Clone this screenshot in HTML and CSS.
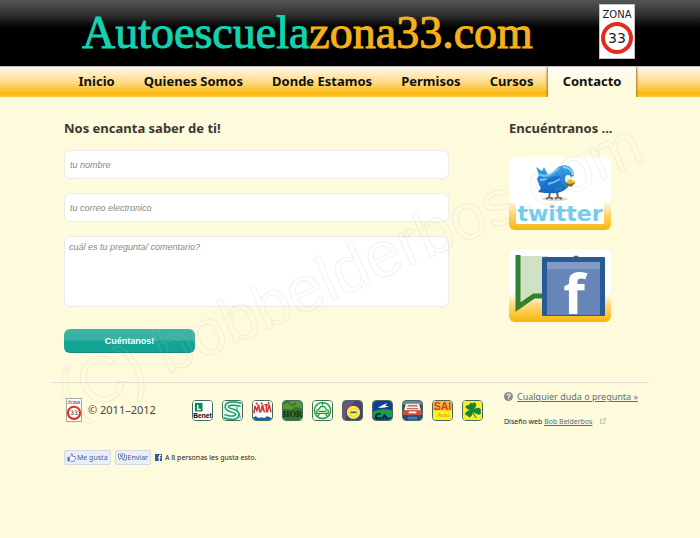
FILE: index.html
```html
<!DOCTYPE html>
<html lang="es">
<head>
<meta charset="utf-8">
<meta name="viewport" content="width=device-width, initial-scale=1">
<title>Autoescuelazona33.com - Contacto</title>
<link rel="stylesheet" href="styles.css">
</head>
<body>
<header class="banner">
  <div class="wrap banner-row">
    <h1 class="brand">Autoescuela<span class="brand-zone">zona33.com</span></h1>
    <svg class="sign" viewBox="0 0 36 55" role="img" aria-label="Zona 33">
      <rect x=".5" y=".5" width="35" height="54" fill="#fff" stroke="#c4c4c8"/>
      <text x="18" y="14" class="sign-zone">ZONA</text>
      <circle cx="18" cy="34" r="14" fill="#fff" stroke="#e32a1c" stroke-width="4"/>
      <text x="18" y="39" class="sign-number">33</text>
    </svg>
  </div>
</header>
<nav class="menu">
  <div class="wrap menu-row">
    <a class="menu-link" href="#inicio">Inicio</a>
    <a class="menu-link" href="#quienes">Quienes Somos</a>
    <a class="menu-link" href="#donde">Donde Estamos</a>
    <a class="menu-link" href="#permisos">Permisos</a>
    <a class="menu-link" href="#cursos">Cursos</a>
    <a class="menu-link menu-current" href="#contacto" aria-current="page">Contacto</a>
  </div>
</nav>
<main class="wrap content">
  <section>
    <h2 class="heading">Nos encanta saber de ti!</h2>
    <form class="form">
      <input class="field" type="text" placeholder="tu nombre" aria-label="tu nombre">
      <input class="field" type="email" placeholder="tu correo electronico" aria-label="tu correo electronico">
      <textarea class="field field-tall" placeholder="cuál es tu pregunta/ comentario?" aria-label="cuál es tu pregunta/ comentario?"></textarea>
      <button class="send" type="submit">Cuéntanos!</button>
    </form>
  </section>
  <aside>
    <h2 class="heading">Encuéntranos ...</h2>
    <div class="social">
      <a class="card" href="#twitter" aria-label="twitter">
        <svg class="card-art" viewBox="0 0 102 73">
          <defs>
            <linearGradient id="bird" x1="0" y1="0" x2="0" y2="1"><stop offset="0" stop-color="#3aa2ea"/><stop offset="1" stop-color="#0f67bd"/></linearGradient>
          </defs>
          <rect x="7" y="40" width="88" height="27" fill="#fff"/>
          <ellipse cx="46" cy="42" rx="13" ry="2" fill="#ddd"/>
          <path d="M41 35l-1 6M48 35l1 6M37 42l3-2 4 2M46 42l3-2 4 2" stroke="#77604d" stroke-width="2" fill="none"/>
          <path d="M31 30l-3-8 2-4-3-8 6 4 2-4 4 8c4-1 6-4 9-7 6-5 14-3 16 3 2 5 0 10-4 15-5 6-12 8-19 7-4 0-7 0-12-1l3-4z" fill="url(#bird)"/>
          <path d="M29 17l6 2 5-1M31 23l9-1" stroke="#76c5f5" stroke-width="2" fill="none"/>
          <path d="M33 31c3-10 9-14 20-11-1 8-8 13-20 11z" fill="#1672cb"/>
          <path d="M38 19c6-2 9-5 12-8M39 27c5-1 9-3 12-5" stroke="#71bff2" stroke-width="2" fill="none"/>
          <path d="M54 10c5 0 9 3 10 8" stroke="#8fcdf6" stroke-width="2" fill="none"/>
          <ellipse cx="59" cy="22" rx="3" ry="4" fill="#f0f6fa"/>
          <ellipse cx="64" cy="22" rx="2" ry="3" fill="#f0f6fa"/>
          <path d="M57 25l4-3 6 3-5 5z" fill="#e5bd25"/>
          <path d="M58 27l8-1-4 4z" fill="#965e18"/>
          <text x="51" y="64" class="twitter-word">twitter</text>
        </svg>
      </a>
      <a class="card" href="#facebook" aria-label="facebook">
        <svg class="card-art" viewBox="0 0 102 73">
          <path d="M9 7h30v40H25L9 58z" fill="#d0e2c5"/>
          <path d="M9 6v52l16-11h10" stroke="#31802e" stroke-width="5" fill="none"/>
          <path d="M64 8q3-3 6 0z" fill="#31802e"/>
          <rect x="33" y="8" width="63" height="59" rx="1" fill="#285998"/>
          <rect x="38" y="13" width="53" height="53" fill="#6885b8"/>
          <rect x="38" y="13" width="53" height="7" fill="#829bc5"/>
          <text x="65" y="65" class="facebook-letter">f</text>
        </svg>
      </a>
    </div>
  </aside>
</main>
<footer class="wrap footer">
  <hr class="rule">
  <div class="footer-row">
    <div class="copyright">
      <svg class="sign-small" viewBox="0 0 36 55" aria-hidden="true">
        <rect x="1" y="1" width="34" height="53" fill="#fff" stroke="#999" stroke-width="2"/>
        <text x="18" y="14" class="sign-zone">ZONA</text>
        <circle cx="18" cy="34" r="14" fill="#fff" stroke="#e32a1c" stroke-width="5"/>
        <text x="18" y="39" class="sign-number">33</text>
      </svg>
      <span>© 2011–2012</span>
    </div>
    <div class="partners">
      <a class="partner" href="#benet" aria-label="Benet"><svg viewBox="0 0 20 20"><rect width="20" height="20" fill="#fff"/><rect x="2" y="2" width="8" height="9" fill="#0a8758"/><path d="M5 4v5h3" stroke="#fff" stroke-width="1.5" fill="none"/><text x="10" y="18" class="benet">Benet</text></svg></a>
      <a class="partner" href="#ss" aria-label="Carretera"><svg viewBox="0 0 20 20"><rect width="20" height="20" fill="#e8f6e7"/><path d="M19 4C15 3 4 1 4 6s11 3 11 8-8 4-14 2" stroke="#149a6b" stroke-width="5" fill="none"/><path d="M19 4C15 3 4 1 4 6s11 3 11 8-8 4-14 2" stroke="#e4f5e9" stroke-width="2" fill="none"/><path d="M15 6c-2 4 3 5 3 12" stroke="#149a6b" fill="none"/></svg></a>
      <a class="partner" href="#rata" aria-label="Mata"><svg viewBox="0 0 20 20"><rect width="20" height="20" fill="#fff"/><path d="M1 13l1-8 2 5 2-6 1 8M8 12l2-8 2 8M9 9h3M12 4h4M14 4v8M15 12l2-8 2 8M3 2l2 2M8 2l2 1M16 1l1 2" stroke="#d63635" stroke-width="1.6" fill="none"/><path d="M0 17l3-1 3 2 3-1 3 1 3-2 5 2v2H0z" fill="#1762a4"/></svg></a>
      <a class="partner" href="#hor" aria-label="Hor"><svg viewBox="0 0 20 20"><rect width="20" height="20" fill="#36742b"/><path d="M0 4l8-4h12v8l-7-2-4 3-9-1z" fill="#579735"/><path d="M6 2l3 3 5-3" stroke="#244b22" fill="none"/><text x="10" y="17" class="hor">HOR</text></svg></a>
      <a class="partner" href="#volante" aria-label="Volante"><svg viewBox="0 0 20 20"><rect width="20" height="20" fill="#f0f9e9"/><circle cx="10" cy="10" r="8.500" stroke="#219a3c" stroke-width="1.500" fill="none"/><path d="M6 9l2-3h4l2 3 2 1v3H4v-3zM10 2v3M5 16l2-3M15 16l-2-3M6 11h8" stroke="#219a3c" stroke-width="1.300" fill="none"/></svg></a>
      <a class="partner" href="#rueda" aria-label="Rueda"><svg viewBox="0 0 20 20"><rect width="20" height="20" fill="#503a78"/><path d="M0 0h13L3 10v10H0z" fill="#76507b"/><circle cx="11" cy="12" r="7" fill="#f6ed42"/><circle cx="11" cy="12" r="4" fill="#fff37a" stroke="#e0cf3a"/><path d="M8 12h6" stroke="#6b5730" stroke-width="2"/></svg></a>
      <a class="partner" href="#paloma" aria-label="Car"><svg viewBox="0 0 20 20"><rect width="20" height="20" fill="#173b99"/><path d="M0 11q10-4 20-1v7H0z" fill="#16a044"/><path d="M5 7l6-3 4-2-2 3 4 1-7 1z" fill="#fff"/><path d="M8 14q-5-1-5 2t5 2M10 18l2-3 3 3" stroke="#101c4d" stroke-width="2" fill="none"/></svg></a>
      <a class="partner" href="#coche" aria-label="Coche"><svg viewBox="0 0 20 20"><rect width="20" height="20" fill="#304668"/><path d="M0 0h20v4H0z" fill="#6b86a0"/><path d="M1 10l2-7h14l2 7z" fill="#f8ebdf"/><path d="M5 5h10M4 8h12" stroke="#cc6a60" stroke-width="1.500"/><rect y="10" width="20" height="5" rx="1" fill="#d94b35"/><path d="M6 12h8" stroke="#fff" stroke-width="2"/><path d="M5 18h10" stroke="#3b7fba" stroke-width="3"/></svg></a>
      <a class="partner" href="#sai" aria-label="Sai Auto"><svg viewBox="0 0 20 20"><rect width="20" height="20" fill="#ffef1b"/><rect width="20" height="10" fill="#f4bd38"/><text x="10" y="9" class="sai">SAI</text><text x="11" y="17" class="sai-auto">Auto</text></svg></a>
      <a class="partner" href="#trebol" aria-label="Trébol"><svg viewBox="0 0 20 20"><rect width="20" height="20" fill="#f8ef27"/><path d="M10 10C5 5 7 1 10 3c3-3 6 1 0 7 6-4 10-2 8 1 2 3-2 5-8-1 0 7-4 8-5 5-4 0-3-5 5-5C4 9 2 6 4 5s6 1 6 5zM10 10q1 5 4 8" fill="#15853b" stroke="#15853b"/></svg></a>
    </div>
    <div class="links">
      <p class="question"><svg class="help" viewBox="0 0 10 10" aria-hidden="true"><circle cx="5" cy="5" r="5" fill="#8a8a91"/><path d="M3.4 4q0-1.7 1.7-1.7t1.7 1.4Q6.8 4.7 5.1 5.6v.8M5.1 7.2v1" stroke="#fff" stroke-width="1.2" fill="none"/></svg><a href="#duda">Cualquier duda o pregunta »</a></p>
      <p class="credit">Diseño web <a href="#bob">Bob Belderbos</a><svg class="external" viewBox="0 0 7 7" aria-hidden="true"><path d="M3 1.5H.5v5h5V4M4 .5h2.500V3M6.500.5L3 4" stroke="#8ed0a0" fill="none"/></svg></p>
    </div>
  </div>
  <div class="likes">
    <button class="like" type="button"><svg viewBox="0 0 9 9" aria-hidden="true"><path d="M.5 4h1.5v4.5H.5z" fill="#5973a9"/><path d="M2.5 4.500L4.500 2V.5q1.500 0 1.200 3H8q.8.5.2 1.500.5.8-.2 1.500 0 1.500-1 1.700H3.500l-1-.5z" fill="#fff" stroke="#5973a9" stroke-width=".8"/></svg>Me gusta</button>
    <button class="like" type="button"><svg viewBox="0 0 9 9" aria-hidden="true"><path d="M.5 1h6v4H3L1.500 6.500V5h-1z" fill="#fff" stroke="#5973a9" stroke-width=".8"/><path d="M7.500 2.500h1v4h-1V8L6 6.500H4M2 2.500h3M2 3.700h3" fill="none" stroke="#5973a9" stroke-width=".8"/></svg>Enviar</button>
    <p class="like-count"><svg viewBox="0 0 8 8" aria-hidden="true"><rect width="8" height="8" fill="#3b5998"/><path d="M7 1.500H6q-1 0-1 1V8M3.500 4.200h3" stroke="#fff" stroke-width="1.300" fill="none"/></svg>A 8 personas les gusta esto.</p>
  </div>
</footer>
<div class="watermark" aria-hidden="true"><span class="watermark-text">(C) bobbelderbos.com</span></div>
</body>
</html>
```

FILE: styles.css
```css
* { box-sizing: border-box; }

body {
  margin: 0;
  min-height: 100vh;
  position: relative;
  background: #fefadc;
  color: #222;
  font-family: "Noto Sans", "Open Sans", sans-serif;
}

.wrap { max-width: 572px; margin: 0 auto; }

.banner { background: linear-gradient(#555 0, #333 14px, #000 28px); }
.banner-row {
  display: flex;
  align-items: center;
  justify-content: space-between;
  height: 66px;
  padding: 0 1px 4px 18px;
}
.brand {
  margin: 0;
  padding-top: 4px;
  font: 400 46px/58px "Liberation Serif", serif;
  color: #14d2b1;
  -webkit-text-stroke: 1px #14d2b1;
}
.brand-zone { color: #f6b11a; -webkit-text-stroke-color: #f6b11a; }
.sign { width: 36px; height: 55px; }
.sign-zone { font: 10px "DejaVu Sans", sans-serif; text-anchor: middle; fill: #222; }
.sign-number { font: 14px "DejaVu Sans", sans-serif; text-anchor: middle; fill: #222; }

.menu {
  background: linear-gradient(#fff8ee, #fedb86 50%, #fcb90c 90%, #fbc94a);
  border-top: 1px solid #bbb;
}
.menu-row { display: flex; }
.menu-link {
  flex: auto;
  padding-bottom: 2px;
  text-align: center;
  font-size: 13px;
  line-height: 28px;
  font-weight: 700;
  color: #111;
  text-decoration: none;
}
.menu-current {
  background: linear-gradient(#fffdf5, #fefadc 60%);
  box-shadow: -1px 0 2px #9c7b30, 1px 0 2px #9c7b30;
  clip-path: inset(0 -4px 0 -4px);
}

.content {
  display: grid;
  grid-template-columns: 1fr 127px;
  gap: 60px;
  padding-top: 21px;
}
.heading { margin: 0; font-size: 13px; line-height: 20px; color: #383832; }
.form { display: flex; flex-direction: column; gap: 14px; margin-top: 12px; }
.field {
  width: 100%;
  height: 29px;
  padding: 0 5px;
  border: 1px solid #ebebea;
  border-radius: 6px;
  background: #fff;
  font: italic 9px/12px "Liberation Sans", sans-serif;
}
.field::placeholder { color: #888; opacity: 1; }
.field-tall { height: 71px; padding: 4px; resize: none; display: block; }
.send {
  width: 131px;
  height: 24px;
  margin-top: 8px;
  padding: 0;
  border: 0;
  border-bottom: 1px solid #178779;
  border-radius: 6px;
  background: linear-gradient(#3fb3a7 0, #37b0a2 48%, #14a596 52%, #10a493);
  color: #fff;
  font: 700 9px/20px "Liberation Sans", sans-serif;
}

.social { display: grid; gap: 19px; margin-top: 19px; justify-items: start; }
.card {
  display: block;
  width: 102px;
  border-radius: 6px;
  background: linear-gradient(#fff 60%, #fcd466 80%, #f8b60c);
}
.card-art { display: block; width: 100%; overflow: visible; }
.twitter-word {
  font: 700 22px "DejaVu Sans", sans-serif;
  text-anchor: middle;
  fill: #73cdec;
}
.facebook-letter { font: 700 56px "Open Sans", sans-serif; text-anchor: middle; fill: #fff; }

.footer { padding-top: 29px; }
.rule { margin: 0 -13px; border: 0; border-top: 1px solid #eadbd0; }
.footer-row { display: flex; align-items: flex-start; padding-top: 6px; }
.copyright {
  display: flex;
  align-items: center;
  gap: 6px;
  width: 128px;
  padding: 9px 0 0 2px;
  font-size: 11px;
  line-height: 24px;
  color: #444;
}
.sign-small { width: 16px; height: 24px; }
.partners { display: flex; gap: 9px; padding-top: 11px; }
.partner {
  width: 21px;
  height: 21px;
  border: 1px solid #456b61;
  border-radius: 4px;
  overflow: hidden;
}
.partner svg { display: block; width: 100%; height: 100%; }
.benet { font: 700 7px "Liberation Sans", sans-serif; text-anchor: middle; }
.hor { font: 700 9px "Liberation Serif", serif; text-anchor: middle; fill: #152c14; }
.sai { font: 700 11px "Liberation Sans", sans-serif; text-anchor: middle; fill: #d93a22; }
.sai-auto { font: 6px "Liberation Sans", sans-serif; text-anchor: middle; fill: #cc9118; }
.links { margin-left: auto; width: 132px; white-space: nowrap; }
.links p { margin: 0; }
.links a { color: #56727c; }
.question { display: flex; align-items: center; gap: 4px; font-size: 9px; line-height: 15px; }
.help { flex: none; width: 9px; height: 9px; }
.links .credit { padding-top: 12px; font-size: 7px; line-height: 12px; }
.external { width: 6px; height: 6px; margin-left: 8px; }

.likes { display: flex; align-items: center; gap: 4px; padding-top: 22px; }
.like {
  display: flex;
  align-items: center;
  gap: 1px;
  height: 15px;
  padding: 0 2px;
  border: 1px solid #d4d9e6;
  border-radius: 2px;
  background: #eceef5;
  color: #46609a;
  font: 7px/12px "Noto Sans", sans-serif;
}
.like svg { width: 9px; height: 9px; }
.like-count { display: flex; align-items: center; gap: 3px; margin: 0; font-size: 7px; line-height: 12px; }
.like-count svg { width: 7px; height: 7px; }

.watermark {
  position: absolute;
  inset: 0;
  display: grid;
  place-items: center;
  overflow: hidden;
  pointer-events: none;
}
.watermark-text {
  font: 64px/1 "Liberation Sans", sans-serif;
  white-space: nowrap;
  color: transparent;
  -webkit-text-stroke: 1px rgba(200, 190, 185, .22);
  transform: rotate(-24deg);
}
```
